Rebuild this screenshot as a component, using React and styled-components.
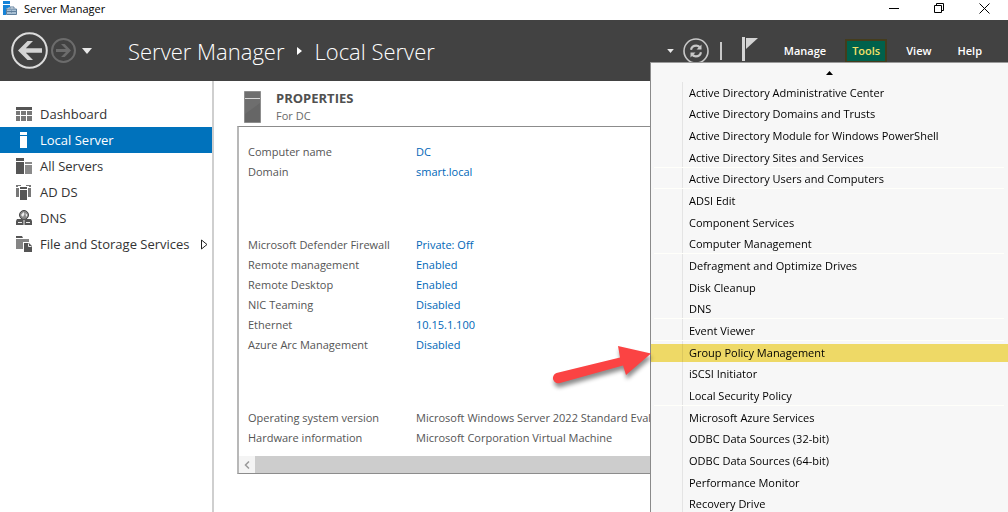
import React from 'react';
import styled, { createGlobalStyle, css } from 'styled-components';

const palette = {
  header: '#424242',
  blue: '#0072bc',
  link: '#0067b8',
  text: '#555',
  icon: '#555',
  menu: '#f7f7f7',
};

const GlobalStyle = createGlobalStyle`
  * {
    box-sizing: border-box;
  }
  body {
    margin: 0;
    overflow: hidden;
    background: #fff;
    font-family: 'Open Sans', 'Noto Sans', sans-serif;
    font-size: 11px;
  }
  button {
    margin: 0;
    padding: 0;
    border: 0;
    background: none;
    font: inherit;
    color: inherit;
    text-align: left;
  }
  svg {
    display: block;
    flex: none;
  }
`;

const Window = styled.div`
  display: flex;
  flex-direction: column;
  height: 100vh;
`;

const TitleBar = styled.div`
  display: flex;
  align-items: center;
  flex: none;
  gap: 6px;
  height: 20px;
  padding: 0 18px 4px 3px;
  color: #000;
`;

const WindowButtons = styled.div`
  display: flex;
  gap: 34px;
  margin-left: auto;
`;

const Header = styled.header`
  position: relative;
  display: flex;
  align-items: center;
  flex: none;
  height: 61px;
  padding: 0 19px 0 11px;
  background: ${palette.header};
  color: #fff;
`;

const NavButtons = styled.div`
  display: flex;
  align-items: center;
  gap: 3px;
`;

const NavCaret = styled.button`
  margin-left: 3px;
`;

const Breadcrumb = styled.h1`
  display: flex;
  align-items: center;
  gap: 12px;
  margin: 0 0 0 36px;
  font-size: 22px;
  line-height: 30px;
  font-weight: 300;
  white-space: nowrap;
`;

const HeaderTools = styled.div`
  display: flex;
  align-items: center;
  gap: 9px;
  margin-left: auto;
`;

const HeaderDivider = styled.span`
  width: 2px;
  height: 18px;
  margin: 0 11px 0 2px;
  background: #c8c8c8;
`;

const MenuBar = styled.nav`
  display: flex;
  align-items: center;
  gap: 12px;
  margin-left: 19px;
`;

const MenuBarButton = styled.button`
  height: 24px;
  padding: 0 7px;
  line-height: 24px;
  font-weight: 600;
  ${props =>
    props.$active &&
    css`
      padding: 0 5px;
      border: 2px solid #443c1c;
      line-height: 20px;
      background: #00614c;
      color: #f2e068;
    `}
`;

const Body = styled.div`
  display: flex;
  flex: 1;
  min-height: 0;
`;

const Sidebar = styled.nav`
  flex: none;
  width: 214px;
  padding-top: 20px;
  border-right: 2px solid #cfcfcf;
`;

const SidebarItem = styled.button`
  display: flex;
  align-items: center;
  gap: 8px;
  width: 100%;
  height: 26px;
  padding: 0 4px 0 16px;
  font-size: 13px;
  color: ${props => (props.$active ? '#fff' : '#333')};
  background: ${props => (props.$active ? palette.blue : 'transparent')};
  white-space: nowrap;
`;

const SidebarLabel = styled.span`
  flex: 1;
`;

const Main = styled.main`
  flex: 1;
  min-width: 0;
  padding: 9px 0 0 23px;
`;

const PanelHead = styled.div`
  display: flex;
  gap: 14px;
  height: 36px;
  padding-left: 7px;
`;

const PanelTitle = styled.h2`
  margin: 0;
  font-size: 13px;
  line-height: 17px;
  font-weight: 700;
  color: #505050;
`;

const PanelSub = styled.div`
  line-height: 17px;
  color: #6a6a6a;
`;

const Panel = styled.section`
  border: 1px solid #8c8c8c;
  border-left: 2px solid #b8b8b8;
`;

const PanelBody = styled.div`
  display: flex;
  flex-direction: column;
  gap: 53px;
  padding: 15px 0 8px 9px;
`;

const PropertyGroup = styled.dl`
  display: grid;
  grid-template-columns: 168px 1fr;
  margin: 0;
  line-height: 20px;
  color: ${palette.text};
  white-space: nowrap;
  dd {
    margin: 0;
  }
`;

const PropertyLink = styled.a`
  color: ${palette.link};
  text-decoration: none;
`;

const ScrollTrack = styled.div`
  display: flex;
  height: 17px;
  background: #cdcdcd;
`;

const ScrollButton = styled.button`
  display: flex;
  align-items: center;
  justify-content: center;
  width: 16px;
  background: #f4f4f4;
`;

const ToolsMenu = styled.div`
  position: absolute;
  top: 42px;
  right: 0;
  z-index: 1;
  display: flex;
  flex-direction: column;
  width: 358px;
  height: calc(100vh - 59px);
  border-top: 1px solid #9a9a9a;
  border-left: 1px solid #8a8a8a;
  background: ${palette.menu};
  color: #000;
`;

const ScrollUp = styled.button`
  display: flex;
  align-items: center;
  justify-content: center;
  flex: none;
  height: 19px;
`;

const MenuList = styled.ul`
  display: flex;
  flex-direction: column;
  flex: 1;
  margin: 0;
  padding: 0;
  list-style: none;
  background: linear-gradient(#e4e4e4, #e4e4e4) 31px 0 / 1px 100% no-repeat;
`;

const MenuRow = styled.li`
  position: relative;
  display: flex;
  align-items: center;
  flex: 1;
  ${props =>
    props.$separated &&
    css`
      &::before {
        content: '';
        position: absolute;
        top: -2px;
        left: 3px;
        right: 4px;
        height: 1px;
        background: #fffffa;
      }
    `}
`;

const MenuItem = styled.button`
  width: 100%;
  height: 18px;
  padding-left: 38px;
  line-height: 18px;
  white-space: nowrap;
  mix-blend-mode: multiply;
  background: ${props => (props.$active ? '#f6e069' : 'transparent')};
`;

const Pointer = styled.svg`
  position: absolute;
  top: 0;
  right: 100%;
  overflow: visible;
  filter: drop-shadow(1px 4px 2px rgba(0, 0, 0, 0.45));
`;

const AppIcon = () => (
  <svg width="15" height="15" viewBox="0 0 15 15">
    <path d="M0 0h7v3H0z" fill="#1583d8" />
    <path d="M0 4h7v2L3 8v6H0z" fill="#1583d8" />
    <path d="M7 7.500V6h4v1.500" fill="none" stroke="#5f7f9c" />
    <path d="M3.500 8h10v5.500h-10z" fill="#a9c0d4" stroke="#5f7f9c" />
    <path d="M4 10.500h9.500M8.500 9.500v2" stroke="#5f7f9c" />
  </svg>
);

const BackIcon = () => (
  <svg width="37" height="37" viewBox="0 0 37 37" fill="none">
    <circle cx="18.500" cy="18.500" r="17.300" stroke="#dcdcdc" strokeWidth="2" />
    <path d="M7 18.500 16.500 9h5.500l-7.200 7.300H31v4.400H14.800L22 28h-5.500z" fill="#d4d4d4" />
  </svg>
);

const ForwardIcon = () => (
  <svg width="25" height="25" viewBox="0 0 25 25" fill="none">
    <circle cx="12.500" cy="12.500" r="11.500" stroke="#6c6c6c" strokeWidth="2" />
    <path d="M20 12.500 13.700 6H10l5 5H5v3h10l-5 5h3.700z" fill="#6c6c6c" />
  </svg>
);

const RefreshIcon = () => (
  <svg width="26" height="26" viewBox="0 0 26 26" fill="none" stroke="#c8c8c8">
    <circle cx="13" cy="13" r="12" strokeWidth="1.600" />
    <path d="M8 11.800c.6-2.700 2.700-4.100 5.200-4.100 1.500 0 2.600.5 3.500 1.400" strokeWidth="2.200" />
    <path d="M18 14.200c-.6 2.700-2.700 4.100-5.200 4.100-1.500 0-2.600-.5-3.500-1.400" strokeWidth="2.200" />
    <path d="M18.500 6.500v5h-5zM7.500 19.500v-5h5z" fill="#c8c8c8" stroke="none" />
  </svg>
);

const FlagIcon = () => (
  <svg width="16" height="28" viewBox="0 0 16 28">
    <path d="M0 0h3v24H0z" fill="#d4d4d4" />
    <path d="M4 1h12L4 12z" fill="#d4d4d4" />
  </svg>
);

const CaretIcon = ({ width, height }) => (
  <svg width={width} height={height} viewBox="0 0 10 6">
    <path d="M0 0h10L5 6z" fill="#e8e8e8" />
  </svg>
);

const DashboardIcon = () => (
  <svg width="16" height="16" viewBox="0 0 16 16" fill={palette.icon}>
    <path d="M0 1h16v3H0z" />
    <path d="M0 5h4v4H0zM0 10h4v5H0z" fill="#777" />
    <path d="M5 5h5v4H5zM11 5h5v4h-5zM5 10h5v5H5zM11 10h5v5h-5z" fill="#777" />
  </svg>
);

const LocalServerIcon = () => (
  <svg width="16" height="16" viewBox="0 0 16 16" fill="#fff">
    <path d="M4 0h7v3H4zM4 4h7v12H4z" />
  </svg>
);

const AllServersIcon = () => (
  <svg width="16" height="16" viewBox="0 0 16 16" fill={palette.icon}>
    <path d="M0 0h8v3H0zM0 4h8v12H0z" />
    <path d="M9 4h7v2H9zM9 7h7v9H9z" fill="#8a8a8a" />
  </svg>
);

const DirectoryIcon = () => (
  <svg width="16" height="16" viewBox="0 0 16 16" fill={palette.icon}>
    <path d="M4 3h7v2H4zM4 6h7v10H4z" />
    <path d="M0 1h5v1H2v1H0zM0 4h3v9H0zM10 1h5v2h-2V2h-3zM12 4h3v9h-3z" fill="#777" />
  </svg>
);

const DnsIcon = () => (
  <svg width="16" height="16" viewBox="0 0 16 16" fill={palette.icon}>
    <circle cx="8" cy="5" r="4.500" fill="#8a8a8a" stroke="#444" />
    <path d="M5 5 7.500 2l1 2L7 7zM9.500 3l2 2-1.500 2z" fill="#eee" />
    <path d="M1 9h14l1 2v4H0v-4z" />
    <path d="M2 12h4v1H2zM10 12h4v1h-4zM7.500 10h1v5h-1z" fill="#eee" />
  </svg>
);

const StorageIcon = () => (
  <svg width="16" height="16" viewBox="0 0 16 16" fill={palette.icon}>
    <path d="M0 0h6l1 2H0z" />
    <path d="M0 3h13v3H7v7H0z" fill="#858585" />
    <path d="M8 7h5l3 3v6H8z" />
    <path d="M12.500 7.500v3h3" fill="none" stroke="#eee" />
  </svg>
);

const ServerIcon = () => (
  <svg width="18" height="34" viewBox="0 0 18 34">
    <path d="M.5 1.500h16v31H.5z" fill="#6e6e6e" stroke="#8d8d8d" />
    <path d="M1 8.500h15" stroke="#d8d8d8" />
    <path d="M1 24 16 13v19H1z" fill="#666" />
  </svg>
);

const sections = [
  { name: 'Dashboard', Icon: DashboardIcon },
  { name: 'Local Server', Icon: LocalServerIcon, active: true },
  { name: 'All Servers', Icon: AllServersIcon },
  { name: 'AD DS', Icon: DirectoryIcon },
  { name: 'DNS', Icon: DnsIcon },
  { name: 'File and Storage Services', Icon: StorageIcon, expandable: true },
];

const propertyGroups = [
  [
    { name: 'Computer name', value: 'DC', link: true },
    { name: 'Domain', value: 'smart.local', link: true },
  ],
  [
    { name: 'Microsoft Defender Firewall', value: 'Private: Off', link: true },
    { name: 'Remote management', value: 'Enabled', link: true },
    { name: 'Remote Desktop', value: 'Enabled', link: true },
    { name: 'NIC Teaming', value: 'Disabled', link: true },
    { name: 'Ethernet', value: '10.15.1.100', link: true },
    { name: 'Azure Arc Management', value: 'Disabled', link: true },
  ],
  [
    {
      name: 'Operating system version',
      value: 'Microsoft Windows Server 2022 Standard Evaluation',
    },
    {
      name: 'Hardware information',
      value: 'Microsoft Corporation Virtual Machine',
    },
  ],
];

const tools = [
  { name: 'Active Directory Administrative Center' },
  { name: 'Active Directory Domains and Trusts' },
  { name: 'Active Directory Module for Windows PowerShell' },
  { name: 'Active Directory Sites and Services' },
  { name: 'Active Directory Users and Computers', separated: true },
  { name: 'ADSI Edit', separated: true },
  { name: 'Component Services' },
  { name: 'Computer Management' },
  { name: 'Defragment and Optimize Drives', separated: true },
  { name: 'Disk Cleanup' },
  { name: 'DNS' },
  { name: 'Event Viewer', separated: true },
  { name: 'Group Policy Management', separated: true, active: true },
  { name: 'iSCSI Initiator' },
  { name: 'Local Security Policy' },
  { name: 'Microsoft Azure Services', separated: true },
  { name: 'ODBC Data Sources (32-bit)' },
  { name: 'ODBC Data Sources (64-bit)' },
  { name: 'Performance Monitor' },
  { name: 'Recovery Drive' },
];

const App = () => {
  return (
    <Window>
      <GlobalStyle />
      <TitleBar>
        <AppIcon />
        <span>Server Manager</span>
        <WindowButtons>
          <button aria-label="Minimize">
            <svg width="11" height="11" viewBox="0 0 11 11" stroke="#000">
              <path d="M0 5.500h10" />
            </svg>
          </button>
          <button aria-label="Restore">
            <svg width="11" height="11" viewBox="0 0 11 11" fill="none" stroke="#000">
              <path d="M.5 2.500h7v7h-7zM2.500 2.500v-2h7v7h-2" />
            </svg>
          </button>
          <button aria-label="Close">
            <svg width="11" height="11" viewBox="0 0 11 11" stroke="#000">
              <path d="m.5.5 10 10M10.500.5l-10 10" />
            </svg>
          </button>
        </WindowButtons>
      </TitleBar>

      <Header>
        <NavButtons>
          <button aria-label="Back">
            <BackIcon />
          </button>
          <button aria-label="Forward">
            <ForwardIcon />
          </button>
          <NavCaret aria-label="History">
            <CaretIcon width={10} height={6} />
          </NavCaret>
        </NavButtons>
        <Breadcrumb>
          <span>Server Manager</span>
          <svg width="6" height="8" viewBox="0 0 6 8">
            <path d="M1 0l5 4-5 4z" fill="#fff" />
          </svg>
          <span>Local Server</span>
        </Breadcrumb>
        <HeaderTools>
          <button aria-label="Options">
            <CaretIcon width={7} height={4} />
          </button>
          <button aria-label="Refresh">
            <RefreshIcon />
          </button>
          <HeaderDivider />
          <button aria-label="Notifications">
            <FlagIcon />
          </button>
        </HeaderTools>
        <MenuBar>
          <MenuBarButton>Manage</MenuBarButton>
          <MenuBarButton $active>Tools</MenuBarButton>
          <MenuBarButton>View</MenuBarButton>
          <MenuBarButton>Help</MenuBarButton>
        </MenuBar>

        <ToolsMenu>
          <ScrollUp aria-label="Scroll up">
            <svg width="7" height="4" viewBox="0 0 7 4">
              <path d="M0 4h7L3.500 0z" />
            </svg>
          </ScrollUp>
          <MenuList>
            {tools.map(tool => (
              <MenuRow key={tool.name} $separated={tool.separated}>
                <MenuItem $active={tool.active}>{tool.name}</MenuItem>
                {tool.active && (
                  <Pointer width="100" height="50" viewBox="0 0 100 50">
                    <path
                      d="M5.500 31 69 15.500 67 4l33 7.500L75 33l-3-9.500L9 41A5.200 5.200 0 0 1 5.500 31z"
                      fill="#fb4343"
                    />
                  </Pointer>
                )}
              </MenuRow>
            ))}
          </MenuList>
        </ToolsMenu>
      </Header>

      <Body>
        <Sidebar>
          {sections.map(({ name, Icon, active, expandable }) => (
            <SidebarItem key={name} $active={active}>
              <Icon />
              <SidebarLabel>{name}</SidebarLabel>
              {expandable && (
                <svg width="8" height="11" viewBox="0 0 8 11" fill="none" stroke="#222">
                  <path d="M1.500 1 7 5.500 1.500 10z" />
                </svg>
              )}
            </SidebarItem>
          ))}
        </Sidebar>
        <Main>
          <PanelHead>
            <ServerIcon />
            <div>
              <PanelTitle>PROPERTIES</PanelTitle>
              <PanelSub>For DC</PanelSub>
            </div>
          </PanelHead>
          <Panel>
            <PanelBody>
              {propertyGroups.map(group => (
                <PropertyGroup key={group[0].name}>
                  {group.map(({ name, value, link }) => (
                    <React.Fragment key={name}>
                      <dt>{name}</dt>
                      <dd>
                        {link ? <PropertyLink href="#">{value}</PropertyLink> : value}
                      </dd>
                    </React.Fragment>
                  ))}
                </PropertyGroup>
              ))}
            </PanelBody>
            <ScrollTrack>
              <ScrollButton aria-label="Scroll left">
                <svg width="6" height="8" viewBox="0 0 6 8" fill="none" stroke="#999">
                  <path d="M5 .5 1.500 4 5 7.500" strokeWidth="1.500" />
                </svg>
              </ScrollButton>
            </ScrollTrack>
          </Panel>
        </Main>
      </Body>
    </Window>
  );
};

export default App;
